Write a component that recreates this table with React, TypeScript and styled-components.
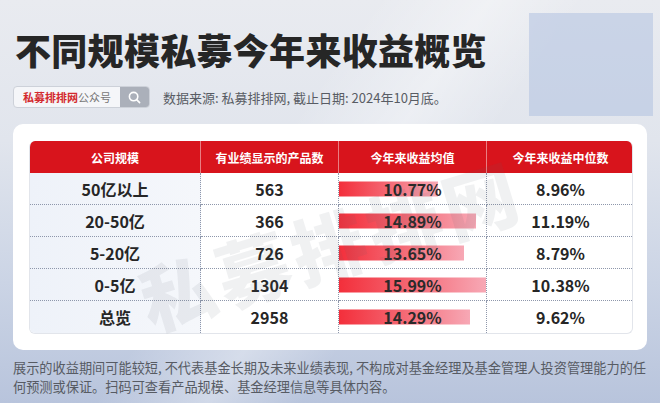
import React from "react";
import styled, { createGlobalStyle } from "styled-components";

const GlobalStyle = createGlobalStyle`
    html, body {
        margin: 0;
        padding: 0;
    }
    body {
        font-family: "Noto Sans CJK SC", "Noto Sans", sans-serif;
    }
`;

const Page = styled.div`
    position: relative;
    width: 660px;
    height: 403px;
    box-sizing: border-box;
    padding: 0 13px;
    overflow: hidden;
    background:
        linear-gradient(125deg, rgba(255, 255, 255, 0) 40%, rgba(255, 255, 255, 0.35) 52%, rgba(255, 255, 255, 0) 62%),
        linear-gradient(180deg, #e9ebf0 0%, #e1e5ed 35%, #cbd4e5 70%, #b8c4dc 100%);
`;

const Decor = styled.div`
    position: absolute;
    top: 13px;
    left: 529px;
    width: 124px;
    height: 103px;
    background: rgba(176, 193, 224, 0.55);
`;

const Title = styled.h1`
    position: relative;
    margin: 29px 0 0 2px;
    font-size: 36px;
    line-height: 40px;
    font-weight: 900;
    color: #262626;
    letter-spacing: 0.3px;
`;

const InfoRow = styled.div`
    position: relative;
    display: flex;
    align-items: center;
    gap: 13px;
    margin-top: 17px;
`;

const SearchBox = styled.div`
    display: flex;
    height: 22px;
    width: 137px;
    box-sizing: border-box;
    border: 1px solid #cdd1d9;
    border-radius: 4px;
    background: #f5f6f9;
    overflow: hidden;
`;

const SearchLabel = styled.div`
    flex: 1;
    display: flex;
    align-items: center;
    padding-left: 9px;
    font-size: 11px;
    color: #777;
`;

const Brand = styled.span`
    color: #d32a2f;
    font-weight: 700;
`;

const SearchButton = styled.div`
    width: 29px;
    display: flex;
    align-items: center;
    justify-content: center;
    background: #abb0ba;
`;

const Source = styled.div`
    font-size: 13px;
    color: #585c64;
`;

const Card = styled.div`
    position: relative;
    margin-top: 16px;
    width: 634px;
    box-sizing: border-box;
    padding: 17px 14px 16px 16px;
    background: #fff;
    border-radius: 10px;
    overflow: hidden;
`;

const Table = styled.div`
    display: grid;
    grid-template-columns: 171px 138px 148px 147px;
    border-radius: 6px;
    border: 1px solid #e2e5eb;
    border-top: none;
    overflow: hidden;
`;

const HeadCell = styled.div<{ $last?: boolean }>`
    height: 32px;
    display: flex;
    align-items: center;
    justify-content: center;
    background: #d8141c;
    color: #fff;
    font-size: 12px;
    font-weight: 700;
    border-right: ${(p) => (p.$last ? "none" : "1px solid rgba(255, 255, 255, 0.45)")};
`;

const Cell = styled.div<{ $first?: boolean; $last?: boolean; $bottom?: boolean }>`
    position: relative;
    height: 32px;
    box-sizing: border-box;
    display: flex;
    align-items: center;
    justify-content: center;
    font-size: 16px;
    font-weight: 700;
    color: #262626;
    background: ${(p) => (p.$first ? "linear-gradient(90deg, #eef2f9, #f5f7fb)" : "transparent")};
    border-right: ${(p) => (p.$last ? "none" : "1px dotted #8e97ab")};
    border-bottom: ${(p) => (p.$bottom ? "none" : "1px dotted #8e97ab")};
`;

const Bar = styled.div`
    position: absolute;
    left: 0;
    top: 50%;
    height: 15px;
    transform: translateY(-50%);
    background: linear-gradient(90deg, #f32f3b 0%, #f4636f 45%, #f7a8b5 100%);
`;

const BarValue = styled.span`
    position: relative;
    font-weight: 600;
    color: #2a2a2a;
`;

const Watermark = styled.div`
    position: absolute;
    left: 50%;
    top: 50%;
    transform: translate(-50%, -42%) rotate(-17deg);
    font-size: 74px;
    line-height: 1;
    font-weight: 900;
    letter-spacing: 5px;
    white-space: nowrap;
    color: rgba(90, 95, 110, 0.09);
    pointer-events: none;
`;

const Footer = styled.p`
    position: relative;
    margin: 8px 0 0 0;
    font-size: 13.2px;
    line-height: 19px;
    color: #575b63;
    white-space: nowrap;
`;

const rows = [
    { scale: "50亿以上", count: "563", mean: 10.77, median: "8.96%" },
    { scale: "20-50亿", count: "366", mean: 14.89, median: "11.19%" },
    { scale: "5-20亿", count: "726", mean: 13.65, median: "8.79%" },
    { scale: "0-5亿", count: "1304", mean: 15.99, median: "10.38%" },
    { scale: "总览", count: "2958", mean: 14.29, median: "9.62%" },
];

const heads = ["公司规模", "有业绩显示的产品数", "今年来收益均值", "今年来收益中位数"];

function SearchIcon(): JSX.Element {
    return (
        <svg width="13" height="13" viewBox="0 0 13 13" fill="none">
            <circle cx="5.6" cy="5.6" r="4.2" stroke="#fff" strokeWidth="1.6" />
            <path d="M8.6 8.6 L11.6 11.6" stroke="#fff" strokeWidth="1.6" strokeLinecap="round" />
        </svg>
    );
}

function App(): JSX.Element {
    const max = Math.max(...rows.map((r) => r.mean));

    return (
        <>
            <GlobalStyle />
            <Page>
                <Decor />
                <Title>不同规模私募今年来收益概览</Title>
                <InfoRow>
                    <SearchBox>
                        <SearchLabel>
                            <Brand>私募排排网</Brand>公众号
                        </SearchLabel>
                        <SearchButton>
                            <SearchIcon />
                        </SearchButton>
                    </SearchBox>
                    <Source>数据来源: 私募排排网, 截止日期: 2024年10月底。</Source>
                </InfoRow>
                <Card>
                    <Table>
                        {heads.map((h, i) => (
                            <HeadCell key={h} $last={i === heads.length - 1}>
                                {h}
                            </HeadCell>
                        ))}
                        {rows.map((r, i) => {
                            const bottom = i === rows.length - 1;
                            return (
                                <React.Fragment key={r.scale}>
                                    <Cell $first $bottom={bottom}>{r.scale}</Cell>
                                    <Cell $bottom={bottom}>{r.count}</Cell>
                                    <Cell $bottom={bottom}>
                                        <Bar style={{ width: `${(r.mean / max) * 100}%` }} />
                                        <BarValue>{r.mean.toFixed(2)}%</BarValue>
                                    </Cell>
                                    <Cell $last $bottom={bottom}>{r.median}</Cell>
                                </React.Fragment>
                            );
                        })}
                    </Table>
                    <Watermark>私募排排网</Watermark>
                </Card>
                <Footer>
                    展示的收益期间可能较短, 不代表基金长期及未来业绩表现, 不构成对基金经理及基金管理人投资管理能力的任
                    <br />
                    何预测或保证。扫码可查看产品规模、基金经理信息等具体内容。
                </Footer>
            </Page>
        </>
    );
}

export default App;
